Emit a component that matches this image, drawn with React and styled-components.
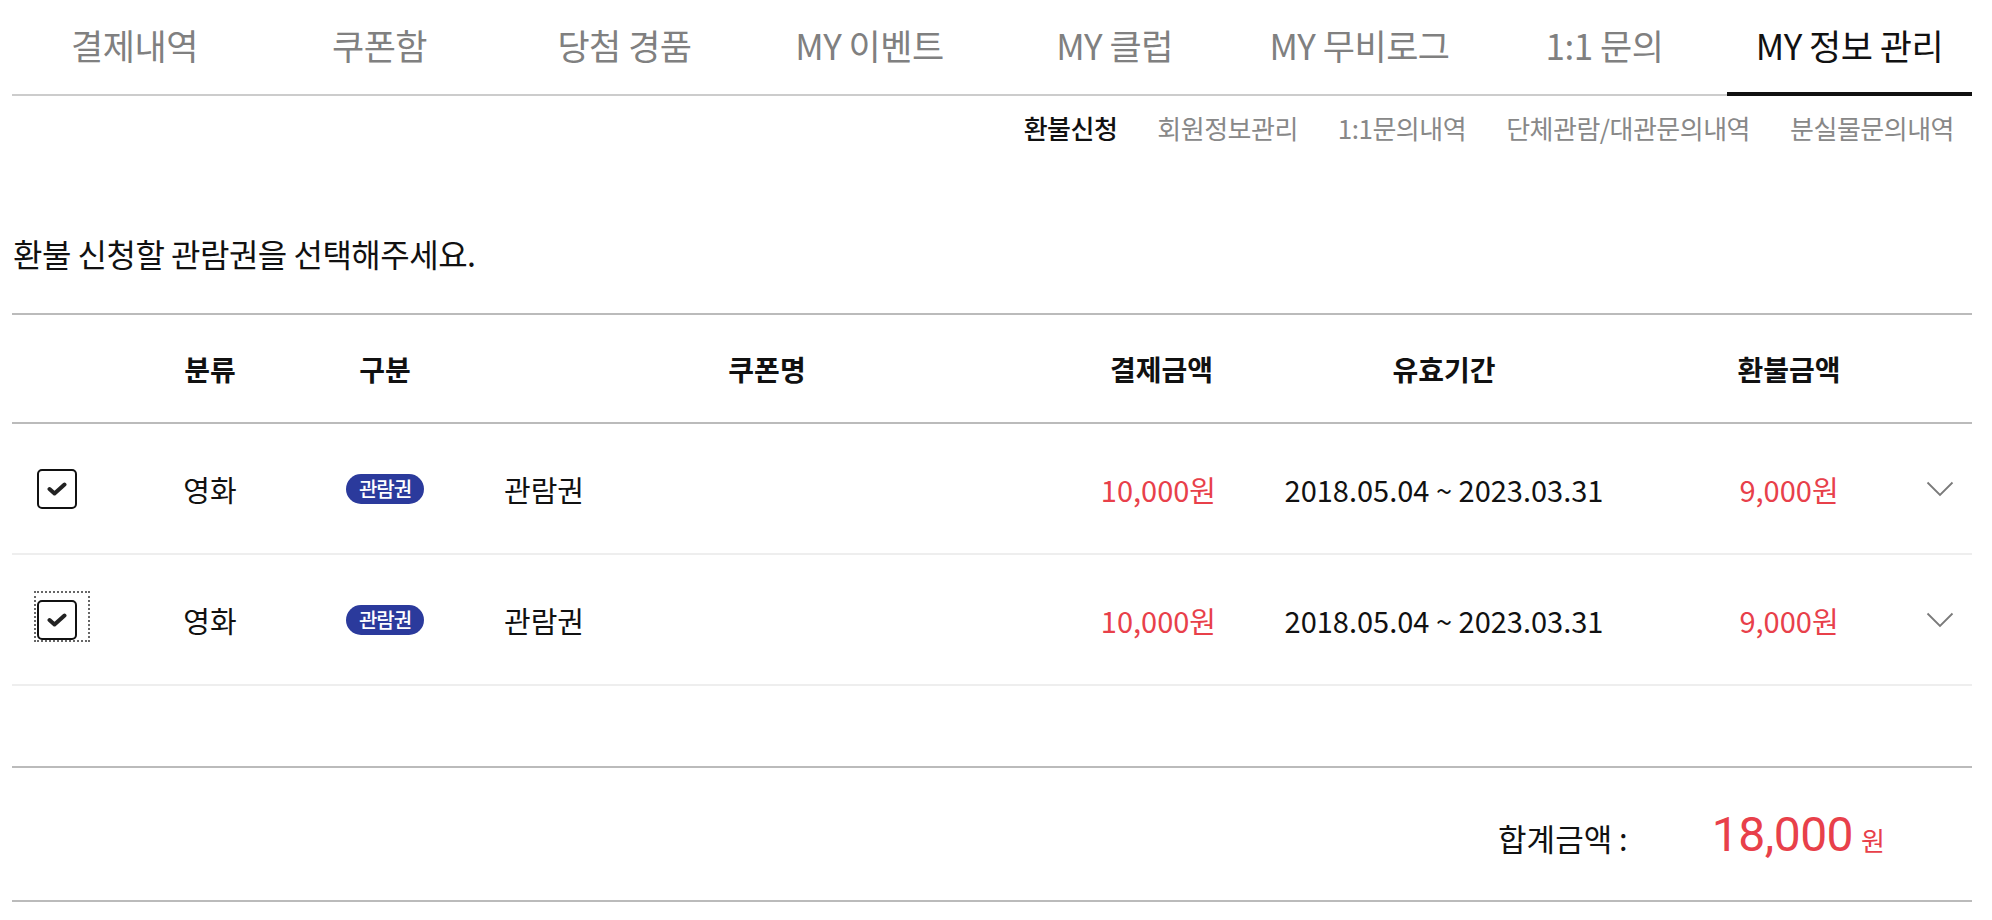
import styled, { createGlobalStyle } from "styled-components";

const GlobalStyle = createGlobalStyle`
  html, body {
    margin: 0;
    padding: 0;
    background: #fff;
  }
  body {
    font-family: "Noto Sans CJK KR", "Noto Sans", sans-serif;
    color: #111;
  }
`;

const TABS = ["결제내역", "쿠폰함", "당첨 경품", "MY 이벤트", "MY 클럽", "MY 무비로그", "1:1 문의", "MY 정보 관리"];
const SUBS = ["환불신청", "회원정보관리", "1:1문의내역", "단체관람/대관문의내역", "분실물문의내역"];

const ROWS = [
  { id: 1, cat: "영화", type: "관람권", name: "관람권", paid: "10,000원", period: "2018.05.04 ~ 2023.03.31", refund: "9,000원" },
  { id: 2, cat: "영화", type: "관람권", name: "관람권", paid: "10,000원", period: "2018.05.04 ~ 2023.03.31", refund: "9,000원", focused: true },
];

const COLS = "130px 136px 214px 550px 194px 416px 274px 46px";

const Page = styled.div`
  padding: 0 20px 0 12px;
`;

const TabBar = styled.ul`
  display: flex;
  margin: 0;
  padding: 0;
  list-style: none;
  border-bottom: 2px solid #ccc;
`;

const Tab = styled.li`
  flex: 1;
  height: 96px;
  padding-bottom: 4px;
  margin-bottom: -2px;
  box-sizing: border-box;
  display: flex;
  align-items: center;
  justify-content: center;
  font-size: 35px;
  letter-spacing: -0.5px;
  color: ${(p) => (p.$active ? "#111" : "#808080")};
  border-bottom: 4px solid ${(p) => (p.$active ? "#111" : "transparent")};
`;

const SubNav = styled.div`
  display: flex;
  justify-content: flex-end;
  gap: 40px;
  padding: 11px 18px 0 0;
  height: 40px;
  align-items: center;
`;

const SubLink = styled.span`
  font-size: 26px;
  letter-spacing: -0.5px;
  color: ${(p) => (p.$active ? "#111" : "#888")};
  font-weight: ${(p) => (p.$active ? 500 : 400)};
`;

const Title = styled.h2`
  margin: 0;
  padding: 88px 0 0 1px;
  height: 36px;
  line-height: 36px;
  font-size: 32px;
  font-weight: 400;
  letter-spacing: -0.5px;
`;

const Table = styled.div`
  margin-top: 42px;
  border-top: 2px solid #bbb;
`;

const HeadRow = styled.div`
  display: grid;
  grid-template-columns: ${COLS};
  height: 107px;
  align-items: center;
  border-bottom: 2px solid #bbb;
`;

const Row = styled.div`
  display: grid;
  grid-template-columns: ${COLS};
  height: 129px;
  align-items: center;
  border-bottom: 2px solid #eee;
`;

const Th = styled.div`
  font-size: 28px;
  font-weight: 700;
  text-align: ${(p) => p.$align || "center"};
  padding-right: ${(p) => (p.$align === "right" ? "23px" : "0")};
`;

const Td = styled.div`
  font-size: 29px;
  color: ${(p) => (p.$red ? "#e8404a" : "#111")};
  padding-left: ${(p) => (p.$align === "left" ? "12px" : "0")};
  padding-right: ${(p) => (p.$align === "right" ? "20px" : "0")};
  display: flex;
  justify-content: ${(p) => (p.$align === "left" ? "flex-start" : p.$align === "right" ? "flex-end" : "center")};
  align-items: center;
`;

const CheckCell = styled.div`
  padding-left: 25px;
  display: flex;
  align-items: center;
`;

const FocusRing = styled.label`
  display: inline-flex;
  padding: 8px 12px 1px 2px;
  margin: -8px -12px -1px -2px;
  outline: ${(p) => (p.$focused ? "2px dotted #666" : "none")};
  outline-offset: -1px;
`;

const Box = styled.span`
  width: 40px;
  height: 40px;
  box-sizing: border-box;
  border: 2px solid #111;
  border-radius: 5px;
  display: flex;
  align-items: center;
  justify-content: center;
`;

const Badge = styled.span`
  display: inline-flex;
  align-items: center;
  justify-content: center;
  width: 78px;
  height: 30px;
  border-radius: 15px;
  background: #2b3a9c;
  color: #fff;
  font-size: 20px;
  font-weight: 500;
  letter-spacing: -1px;
`;

const ChevronCell = styled.div`
  display: flex;
  align-items: center;
`;

const Spacer = styled.div`
  height: 80px;
  border-bottom: 2px solid #bbb;
`;

const Total = styled.div`
  display: flex;
  justify-content: flex-end;
  align-items: baseline;
  height: 134px;
  padding: 38px 87px 0 0;
  box-sizing: border-box;
  border-bottom: 2px solid #bbb;
`;

const TotalLabel = styled.span`
  font-size: 31px;
  margin-right: 84px;
`;

const TotalNum = styled.span`
  font-family: Roboto, "Noto Sans", sans-serif;
  font-size: 48px;
  color: #e8404a;
  letter-spacing: -0.5px;
`;

const TotalUnit = styled.span`
  font-size: 26px;
  color: #e8404a;
  margin-left: 8px;
`;

function Check() {
  return (
    <svg width="20" height="14" viewBox="0 0 20 14">
      <path d="M2.5 7 L7.5 11.5 L17.5 2.5" fill="none" stroke="#222" strokeWidth="4" strokeLinecap="round" strokeLinejoin="round" />
    </svg>
  );
}

function Chevron() {
  return (
    <svg width="28" height="16" viewBox="0 0 28 16">
      <path d="M1.5 1.5 L14 14 L26.5 1.5" fill="none" stroke="#7a7a7a" strokeWidth="1.8" />
    </svg>
  );
}

export default function App() {
  return (
    <Page>
      <GlobalStyle />
      <TabBar>
        {TABS.map((t, i) => (
          <Tab key={t} $active={i === TABS.length - 1}>{t}</Tab>
        ))}
      </TabBar>
      <SubNav>
        {SUBS.map((s, i) => (
          <SubLink key={s} $active={i === 0}>{s}</SubLink>
        ))}
      </SubNav>
      <Title>환불 신청할 관람권을 선택해주세요.</Title>
      <Table>
        <HeadRow>
          <Th />
          <Th>분류</Th>
          <Th>구분</Th>
          <Th>쿠폰명</Th>
          <Th $align="right">결제금액</Th>
          <Th>유효기간</Th>
          <Th>환불금액</Th>
          <Th />
        </HeadRow>
        {ROWS.map((r) => (
          <Row key={r.id}>
            <CheckCell>
              <FocusRing $focused={r.focused}>
                <Box><Check /></Box>
              </FocusRing>
            </CheckCell>
            <Td>{r.cat}</Td>
            <Td><Badge>{r.type}</Badge></Td>
            <Td $align="left">{r.name}</Td>
            <Td $align="right" $red>{r.paid}</Td>
            <Td>{r.period}</Td>
            <Td $red>{r.refund}</Td>
            <ChevronCell><Chevron /></ChevronCell>
          </Row>
        ))}
        <Spacer />
        <Total>
          <TotalLabel>합계금액 :</TotalLabel>
          <TotalNum>18,000</TotalNum>
          <TotalUnit>원</TotalUnit>
        </Total>
      </Table>
    </Page>
  );
}
